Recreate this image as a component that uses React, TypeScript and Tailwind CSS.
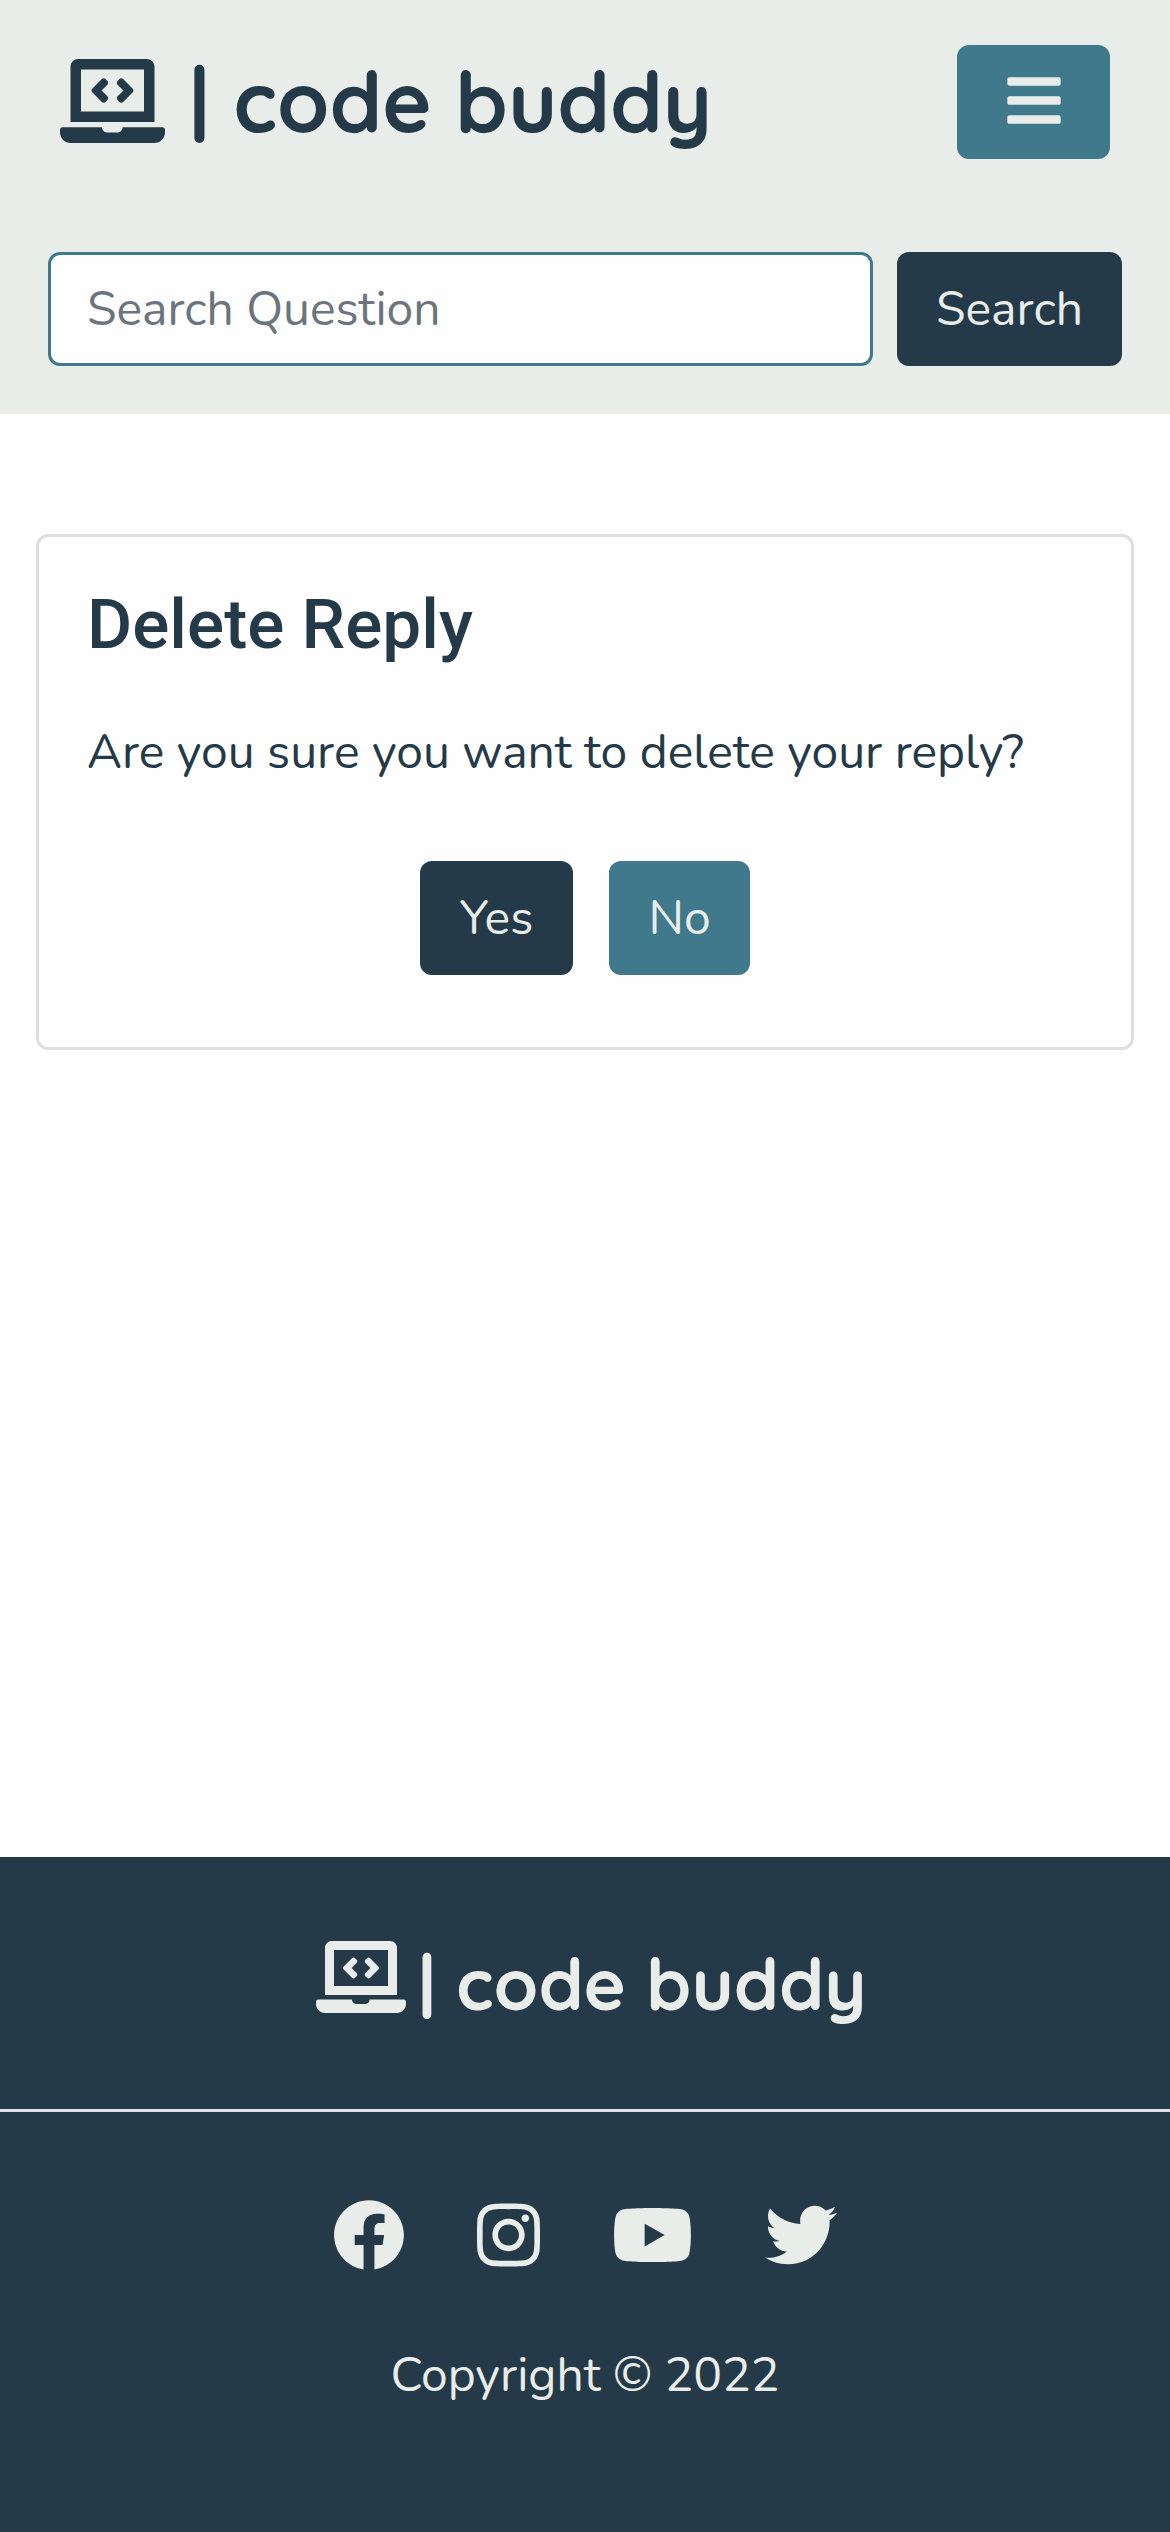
import React from 'react';
import { FaBars, FaFacebook, FaInstagram, FaLaptopCode, FaTwitter, FaYoutube } from 'react-icons/fa';

function Wordmark({ className }: { className: string }) {
  return (
    <span className={`font-[Quicksand,'DejaVu_Sans',sans-serif] leading-[1.25] font-bold whitespace-pre ${className}`}>
      | code buddy
    </span>
  );
}

function Header() {
  return (
    <header className="h-[414px] bg-[#e8ede9] px-12 pt-[45px]">
      <div className="flex h-[114px] items-start justify-between px-3">
        <a href="#" className="flex items-start text-[#253a48]">
          <FaLaptopCode className="mt-[13.5px] h-[84px] w-[105px]" />
          <Wordmark className="mt-[3px] ml-[24px] text-[84px]" />
        </a>
        <button aria-label="Menu" className="flex h-[114px] w-[153px] items-center justify-center rounded-xl bg-[#40788c] text-[#e8ede9]">
          <FaBars className="-mt-[3px] h-[61px] w-[54px]" />
        </button>
      </div>
      <form className="mt-[93px] flex gap-6">
        <input
          type="search"
          placeholder="Search Question"
          className="h-[114px] min-w-0 flex-1 rounded-xl border-3 border-[#40788c] bg-[#fefefe] px-9 text-[#6c757d] placeholder:text-[#6c757d]"
        />
        <button type="button" className="h-[114px] w-[225px] rounded-xl bg-[#253a48] text-[#e8ede9]">
          Search
        </button>
      </form>
    </header>
  );
}

function DeleteCard() {
  return (
    <section className="mx-9 mt-[120px] h-[516px] rounded-xl border-3 border-[#dfdfdf] px-12">
      <h1 className="mt-[47px] font-[Roboto] text-[69.3px] leading-[82px] font-medium">Delete Reply</h1>
      <p className="mt-[50px] leading-[72px] whitespace-nowrap">Are you sure you want to delete your reply?</p>
      <div className="mt-[73px] flex justify-center gap-9 text-[#e8ede9]">
        <button className="h-[114px] w-[153px] rounded-xl bg-[#253a48]">Yes</button>
        <button className="h-[114px] w-[141px] rounded-xl bg-[#40788c]">No</button>
      </div>
    </section>
  );
}

function Footer() {
  return (
    <footer className="h-[675px] bg-[#253a48] text-[#e8ede9]">
      <div className="flex h-[255px] items-start border-b-3 border-[#dee2e6] pl-[316px]">
        <FaLaptopCode className="mt-[84px] h-[72px] w-[90px]" />
        <Wordmark className="mt-[81px] ml-[12px] text-[72px]" />
      </div>
      <nav className="mt-[87px] flex items-center justify-center gap-[72px]">
        <FaFacebook className="h-[72px] w-[72px]" />
        <FaInstagram className="h-[72px] w-[63px]" />
        <FaYoutube className="h-[72px] w-[81px]" />
        <FaTwitter className="h-[72px] w-[72px]" />
      </nav>
      <p className="mt-[68px] text-center leading-[72px]">Copyright © 2022</p>
    </footer>
  );
}

export default function App() {
  return (
    <div className="flex h-[2532px] w-[1170px] flex-col bg-[#fefefe] font-[Nunito,'Noto_Sans',sans-serif] text-[48px] font-normal text-[#253a48]">
      <Header />
      <main className="flex-1">
        <DeleteCard />
      </main>
      <Footer />
    </div>
  );
}
